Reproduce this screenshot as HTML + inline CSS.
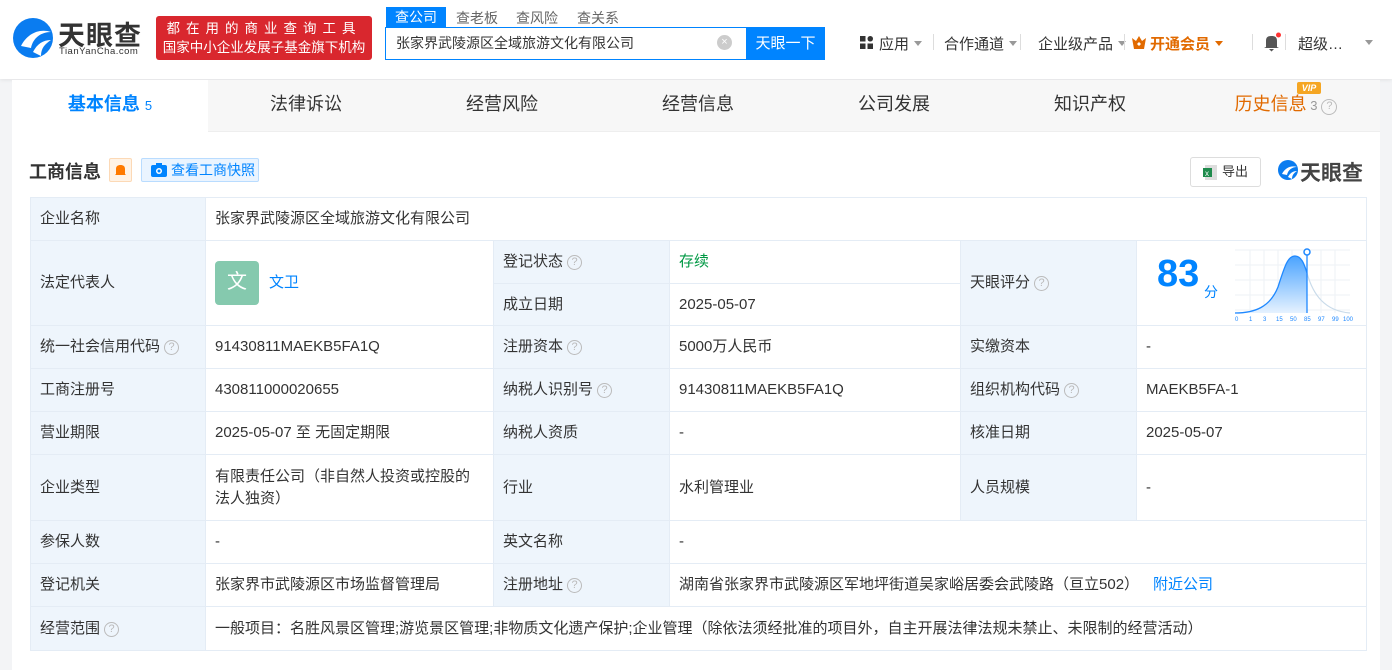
<!DOCTYPE html>
<html><head><meta charset="utf-8"><style>
*{box-sizing:border-box;margin:0;padding:0}
body{width:1392px;height:661px;overflow:hidden;background:#f3f4f6;font-family:"Liberation Sans","Noto Sans CJK SC",sans-serif;color:#333;position:relative}
.hdr{position:absolute;left:0;top:0;width:1392px;height:79px;background:#fff;box-shadow:0 1px 4px rgba(0,0,0,.08)}
.a{position:absolute}
.card{position:absolute;left:12px;top:80px;width:1368px;height:590px;background:#fff}
.tabs{position:absolute;left:12px;top:80px;width:1368px;height:52px;background:#f7f7f7;border-bottom:1px solid #eee}
.tab{position:absolute;top:0;height:52px;line-height:48px;font-size:18px;color:#333;text-align:center;width:196px}
table{position:absolute;left:30px;top:197px;border-collapse:collapse;table-layout:fixed;width:1336px;font-size:15px}
td{border:1px solid #e4ecf5;padding:0 9px;vertical-align:middle;line-height:22px}
td.l{background:#eef5fc;color:#333}
.q{display:inline-block;width:15px;height:15px;border:1px solid #bbb;border-radius:50%;color:#bbb;font-size:11px;line-height:13px;text-align:center;vertical-align:1px;margin-left:4px}
.b{color:#0084ff}
.nav{position:absolute;top:33px;font-size:15px;color:#333}
.tri{display:inline-block;border-left:4px solid transparent;border-right:4px solid transparent;border-top:5px solid #999;vertical-align:3px;margin-left:5px}
.sep{position:absolute;top:34px;width:1px;height:16px;background:#ddd}
.tl{position:absolute;top:8px;font-size:14px;color:#666}
</style></head><body>
<div class="hdr">
 <svg class="a" style="left:11px;top:16px" width="44" height="44" viewBox="0 0 44 44"><circle cx="22" cy="22" r="20" fill="#0a7cf0"/><path d="M10 30 C16 18 28 12 40 16 C30 16 22 22 20 32 Z" fill="#fff"/><path d="M22 36 C26 28 32 24 40 24 C34 28 30 32 30 40 Z" fill="#fff"/></svg>
 <div class="a" style="left:58px;top:14px;font-size:27px;font-weight:bold;color:#333;letter-spacing:1px">天眼查</div>
 <div class="a" style="left:59px;top:46px;font-size:9.5px;color:#333;letter-spacing:.5px">TianYanCha.com</div>
 <div class="a" style="left:156px;top:16px;width:216px;height:44px;background:#d9272e;border-radius:3px;color:#fff;font-size:13.5px;text-align:center;line-height:19px;padding-top:3px"><div style="letter-spacing:6px">都在用的商业查询工具</div><div>国家中小企业发展子基金旗下机构</div></div>
 <div class="a" style="left:386px;top:7px;width:60px;height:21px;background:#0084ff;color:#fff;font-size:14px;text-align:center;line-height:20px">查公司</div>
 <div class="tl" style="left:456px">查老板</div><div class="tl" style="left:516px">查风险</div><div class="tl" style="left:577px">查关系</div>
 <div class="a" style="left:385px;top:27px;width:362px;height:33px;border:1px solid #0084ff;border-right:none;font-size:14px;line-height:31px;padding-left:10px">张家界武陵源区全域旅游文化有限公司</div>
 <div class="a" style="left:717px;top:35px;width:15px;height:15px;border-radius:50%;background:#ccc;color:#fff;font-size:11px;text-align:center;line-height:15px">×</div>
 <div class="a" style="left:746px;top:27px;width:79px;height:33px;background:#0084ff;color:#fff;font-size:15px;text-align:center;line-height:33px">天眼一下</div>
 <svg class="a" style="left:860px;top:36px" width="13" height="13"><rect x="0" y="0" width="5.5" height="5.5" fill="#333"/><rect x="7.5" y="0" width="5.5" height="5.5" rx="2.7" fill="#333"/><rect x="0" y="7.5" width="5.5" height="5.5" fill="#333"/><rect x="7.5" y="7.5" width="5.5" height="5.5" fill="#333"/></svg>
 <div class="nav" style="left:879px">应用<span class="tri"></span></div>
 <div class="sep" style="left:933px"></div>
 <div class="nav" style="left:944px">合作通道<span class="tri"></span></div>
 <div class="sep" style="left:1020px"></div>
 <div class="nav" style="left:1038px">企业级产品<span class="tri"></span></div>
 <div class="sep" style="left:1124px"></div>
 <svg class="a" style="left:1132px;top:36px" width="14" height="13"><path d="M0 2 L4 5 L7 0 L10 5 L14 2 L12 13 L2 13 Z" fill="#e16a00"/><path d="M5 8 L7 6 L9 8 L7 10Z" fill="#fff"/></svg>
 <div class="nav" style="left:1150px;color:#e16a00;font-weight:bold">开通会员<span class="tri" style="border-top-color:#e16a00"></span></div>
 <div class="sep" style="left:1252px"></div>
 <svg class="a" style="left:1262px;top:32px" width="20" height="20"><path d="M4 15 L4 9 C4 5 6 4 9.5 4 C13 4 15 5 15 9 L15 15 L17 16 L2 16 Z M7 17 L12 17 L9.5 19.5Z" fill="#555"/><circle cx="16.5" cy="3" r="2.5" fill="#f33"/></svg>
 <div class="sep" style="left:1285px"></div>
 <div class="nav" style="left:1298px">超级…</div>
 <span class="tri a" style="left:1360px;top:40px"></span>
</div>
<div class="card"></div>
<div class="tabs">
 <div class="tab" style="left:0;background:#fff;color:#0084ff;font-weight:bold">基本信息 <span style="font-size:13px;font-weight:normal">5</span></div>
 <div class="tab" style="left:196px">法律诉讼</div>
 <div class="tab" style="left:392px">经营风险</div>
 <div class="tab" style="left:588px">经营信息</div>
 <div class="tab" style="left:784px">公司发展</div>
 <div class="tab" style="left:980px">知识产权</div>
 <div class="tab" style="left:1176px;color:#e16a00">历史信息<span style="font-size:13px;color:#999"> 3</span><span class="q" style="width:16px;height:16px">?</span></div>
 <div class="a" style="left:1285px;top:2px;width:24px;height:12px;background:#f5a623;color:#fff;font-size:9px;font-style:italic;font-weight:bold;text-align:center;line-height:12px;border-radius:2px">VIP</div>
</div>
<div class="a" style="left:29px;top:158px;font-size:18px;font-weight:bold;color:#333">工商信息</div>
<div class="a" style="left:109px;top:158px;width:23px;height:24px;background:#fff3e6;border:1px solid #fcd9b6;border-radius:2px"><svg width="21" height="22"><path d="M6 15 L6 10 C6 7 8 6 10.5 6 C13 6 15 7 15 10 L15 15 L16 16 L5 16 Z" fill="#ff7a00"/></svg></div>
<div class="a" style="left:141px;top:158px;width:118px;height:24px;background:#eaf4ff;border:1px solid #b9dcff;border-radius:2px;font-size:14px;color:#0084ff;line-height:22px;padding-left:29px">查看工商快照</div>
<svg class="a" style="left:151px;top:163px" width="16" height="14"><rect x="0" y="2" width="16" height="12" rx="2" fill="#0084ff"/><rect x="5" y="0" width="6" height="3" fill="#0084ff"/><circle cx="8" cy="8" r="3" fill="#fff"/><circle cx="8" cy="8" r="1.5" fill="#0084ff"/></svg>
<div class="a" style="left:1190px;top:157px;width:71px;height:30px;border:1px solid #ddd;border-radius:3px;font-size:13px;line-height:28px;padding-left:31px">导出</div>
<svg class="a" style="left:1203px;top:165px" width="14" height="15"><rect x="2" y="0" width="12" height="15" fill="#ddd"/><rect x="0" y="3" width="9" height="9" fill="#1f8b4c"/><text x="2" y="11" font-size="8" fill="#fff" font-family="Liberation Sans">x</text></svg>
<svg class="a" style="left:1277px;top:159px" width="22" height="22" viewBox="0 0 44 44"><circle cx="22" cy="22" r="20" fill="#0a7cf0"/><path d="M10 30 C16 18 28 12 40 16 C30 16 22 22 20 32 Z" fill="#fff"/><path d="M22 36 C26 28 32 24 40 24 C34 28 30 32 30 40 Z" fill="#fff"/></svg>
<div class="a" style="left:1300px;top:157px;font-size:21px;font-weight:bold;color:#444">天眼查</div>
<table>
<colgroup><col style="width:175px"><col style="width:288px"><col style="width:176px"><col style="width:291px"><col style="width:176px"><col style="width:230px"></colgroup>
<tr style="height:43px"><td class="l">企业名称</td><td colspan="5">张家界武陵源区全域旅游文化有限公司</td></tr>
<tr style="height:43px"><td class="l" rowspan="2">法定代表人</td><td rowspan="2"><span style="display:inline-block;width:44px;height:44px;background:#85c9ae;border-radius:4px;color:#fff;font-size:20px;text-align:center;line-height:42px;vertical-align:middle">文</span><span class="b" style="margin-left:10px">文卫</span></td><td class="l">登记状态<span class="q">?</span></td><td style="color:#009944">存续</td><td class="l" rowspan="2">天眼评分<span class="q">?</span></td><td rowspan="2" style="position:relative;padding:0">
<span style="position:absolute;left:20px;top:22px;font-size:38px;font-weight:bold;color:#0084ff">83</span><span style="position:absolute;left:67px;top:40px;font-size:14px;color:#0084ff">分</span>
<svg style="position:absolute;left:98px;top:6px" width="120" height="76"><g stroke="#eef2f6" stroke-width="1"><line x1="0" y1="3" x2="115" y2="3"/><line x1="0" y1="18" x2="115" y2="18"/><line x1="0" y1="33" x2="115" y2="33"/><line x1="0" y1="48" x2="115" y2="48"/><line x1="0" y1="63" x2="115" y2="63"/><line x1="15" y1="3" x2="15" y2="66"/><line x1="29" y1="3" x2="29" y2="66"/><line x1="43" y1="3" x2="43" y2="66"/><line x1="57" y1="3" x2="57" y2="66"/><line x1="72" y1="3" x2="72" y2="66"/><line x1="86" y1="3" x2="86" y2="66"/><line x1="100" y1="3" x2="100" y2="66"/></g><defs><linearGradient id="g" x1="0" y1="0" x2="0" y2="1"><stop offset="0" stop-color="#4aa3ff"/><stop offset="1" stop-color="#e6f2ff"/></linearGradient></defs><path d="M0 66 C20 66 35 60 43 40 C50 18 53 9 60 9 C66 9 69 16 72 26 L72 66 Z" fill="url(#g)"/><path d="M0 66 C20 66 35 60 43 40 C50 18 53 9 60 9 C66 9 69 16 72 26" fill="none" stroke="#1e88ff" stroke-width="1.3"/><path d="M72 26 C78 48 90 64 115 66" fill="none" stroke="#c9dbea" stroke-width="1.2"/><line x1="72" y1="6" x2="72" y2="66" stroke="#1e88ff" stroke-width="1.3"/><circle cx="72" cy="5" r="3" fill="#fff" stroke="#1e88ff" stroke-width="1.5"/><text y="74" font-size="6" fill="#1e88ff" font-family="Liberation Sans"><tspan x="0">0</tspan><tspan x="14">1</tspan><tspan x="28">3</tspan><tspan x="41">15</tspan><tspan x="55">50</tspan><tspan x="69">85</tspan><tspan x="83">97</tspan><tspan x="97">99</tspan><tspan x="108">100</tspan></text></svg></td></tr>
<tr style="height:42px"><td class="l">成立日期</td><td>2025-05-07</td></tr>
<tr style="height:43px"><td class="l">统一社会信用代码<span class="q">?</span></td><td>91430811MAEKB5FA1Q</td><td class="l">注册资本<span class="q">?</span></td><td>5000万人民币</td><td class="l">实缴资本</td><td>-</td></tr>
<tr style="height:43px"><td class="l">工商注册号</td><td>430811000020655</td><td class="l">纳税人识别号<span class="q">?</span></td><td>91430811MAEKB5FA1Q</td><td class="l">组织机构代码<span class="q">?</span></td><td>MAEKB5FA-1</td></tr>
<tr style="height:43px"><td class="l">营业期限</td><td>2025-05-07 至 无固定期限</td><td class="l">纳税人资质</td><td>-</td><td class="l">核准日期</td><td>2025-05-07</td></tr>
<tr style="height:66px"><td class="l">企业类型</td><td>有限责任公司（非自然人投资或控股的法人独资）</td><td class="l">行业</td><td>水利管理业</td><td class="l">人员规模</td><td>-</td></tr>
<tr style="height:43px"><td class="l">参保人数</td><td>-</td><td class="l">英文名称</td><td colspan="3">-</td></tr>
<tr style="height:43px"><td class="l">登记机关</td><td>张家界市武陵源区市场监督管理局</td><td class="l">注册地址<span class="q">?</span></td><td colspan="3">湖南省张家界市武陵源区军地坪街道吴家峪居委会武陵路（亘立502）<span class="b" style="margin-left:14px">附近公司</span></td></tr>
<tr style="height:44px"><td class="l">经营范围<span class="q">?</span></td><td colspan="5">一般项目：名胜风景区管理;游览景区管理;非物质文化遗产保护;企业管理（除依法须经批准的项目外，自主开展法律法规未禁止、未限制的经营活动）</td></tr>
</table>
</body></html>
